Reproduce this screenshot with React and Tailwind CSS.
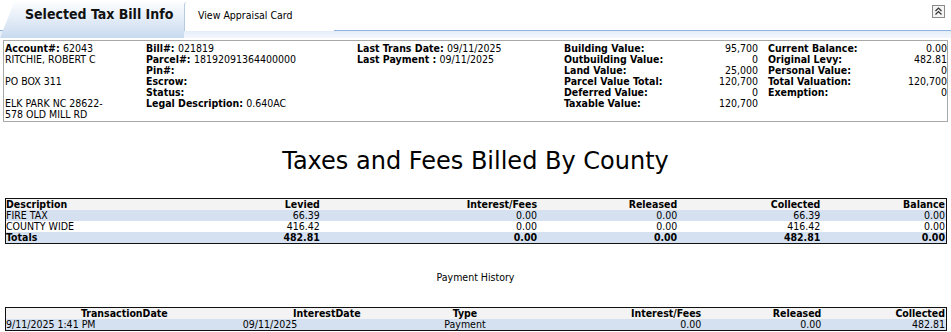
import React from 'react';

const owner = [
  { label: 'Account#:', value: '62043' },
  { value: 'RITCHIE, ROBERT C' },
  { value: '' },
  { value: 'PO BOX 311' },
  { value: '' },
  { value: 'ELK PARK NC 28622-' },
  { value: '578 OLD MILL RD' },
];

const bill = [
  { label: 'Bill#:', value: '021819' },
  { label: 'Parcel#:', value: '18192091364400000' },
  { label: 'Pin#:', value: '' },
  { label: 'Escrow:', value: '' },
  { label: 'Status:', value: '' },
  { label: 'Legal Description:', value: '0.640AC' },
];

const trans = [
  { label: 'Last Trans Date:', value: '09/11/2025' },
  { label: 'Last Payment :', value: '09/11/2025' },
];

const values = [
  ['Building Value:', '95,700'],
  ['Outbuilding Value:', '0'],
  ['Land Value:', '25,000'],
  ['Parcel Value Total:', '120,700'],
  ['Deferred Value:', '0'],
  ['Taxable Value:', '120,700'],
];

const balances = [
  ['Current Balance:', '0.00'],
  ['Original Levy:', '482.81'],
  ['Personal Value:', '0'],
  ['Total Valuation:', '120,700'],
  ['Exemption:', '0'],
];

const billed = [
  ['FIRE TAX', '66.39', '0.00', '0.00', '66.39', '0.00'],
  ['COUNTY WIDE', '416.42', '0.00', '0.00', '416.42', '0.00'],
];

function LabelLine({ label, value }) {
  return (
    <div className="h-[11px] whitespace-nowrap">
      {label && <span className="font-bold">{label} </span>}
      {value}
    </div>
  );
}

function ValueRows({ rows, width }) {
  return (
    <div className={width}>
      {rows.map(([l, v]) => (
        <div key={l} className="flex justify-between h-[11px] whitespace-nowrap">
          <span className="font-bold">{l}</span>
          <span>{v}</span>
        </div>
      ))}
    </div>
  );
}

function CollapseIcon() {
  return (
    <svg width="13" height="13" viewBox="0 0 13 13">
      <rect x="0.5" y="0.5" width="12" height="12" fill="#f4f4f4" stroke="#8a8a8a" />
      <path d="M3.5 6 L6.5 3 L9.5 6 M3.5 9.5 L6.5 6.5 L9.5 9.5" fill="none" stroke="#333" strokeWidth="1.2" />
    </svg>
  );
}

export default function App() {
  return (
    <div className="w-[951px] h-[332px] bg-white overflow-hidden text-black text-[10.5px] leading-[11px] font-['DejaVu_Sans_Condensed','DejaVu_Sans',sans-serif]">
      {/* tab bar */}
      <div className="relative h-[38px]">
        <div className="absolute left-0 right-0 top-[30px] h-[8px] border-t border-[#8fb4de] bg-linear-to-b from-[#e4edf8] to-[#f4f8fc]" />
        <div className="absolute left-0 top-0 h-[38px] w-[184px] bg-linear-to-b from-white to-[#c9daef] [clip-path:polygon(15px_0,100%_0,100%_100%,0_100%)] rounded-tr-[4px] pl-[25px] pt-[6px]">
          <span className="text-[14px] leading-[16px] font-bold text-[#111]">Selected Tax Bill Info</span>
        </div>
        <div className="absolute left-[184px] top-[2px] h-[29px] w-[150px] border-l border-[#b6c9e0] rounded-tl-[3px] bg-white pt-[8px] pl-[13px] text-[10.5px]">
          View Appraisal Card
        </div>
        <div className="absolute right-[6px] top-[5px]">
          <CollapseIcon />
        </div>
      </div>

      {/* info box */}
      <div className="mx-[3px] mt-[2px] h-[82px] border border-[#a8a8a8] flex pt-[2px] pl-[1px]">
        <div className="w-[141px]">
          {owner.map((o, i) => <LabelLine key={i} {...o} />)}
        </div>
        <div className="w-[211px]">
          {bill.map((o, i) => <LabelLine key={i} {...o} />)}
        </div>
        <div className="w-[207px]">
          {trans.map((o, i) => <LabelLine key={i} {...o} />)}
        </div>
        <ValueRows rows={values} width="w-[194px] mr-[10px]" />
        <ValueRows rows={balances} width="w-[179px]" />
      </div>

      {/* title */}
      <div className="mt-[24px] text-center text-[24px] leading-[30px] font-['DejaVu_Sans',sans-serif]">
        Taxes and Fees Billed By County
      </div>

      {/* billed table */}
      <table className="mt-[22px] ml-[5px] w-[942px] border border-[#111] border-collapse">
        <colgroup>
          <col className="w-[148px]" />
          <col className="w-[166px]" />
          <col className="w-[217px]" />
          <col className="w-[140px]" />
          <col className="w-[143px]" />
          <col className="w-[126px]" />
        </colgroup>
        <thead>
          <tr className="bg-[#f3f3f3] h-[11px] font-bold">
            <td className="text-left p-0">Description</td>
            <td className="text-right p-0">Levied</td>
            <td className="text-right p-0">Interest/Fees</td>
            <td className="text-right p-0">Released</td>
            <td className="text-right p-0">Collected</td>
            <td className="text-right p-0 pr-[1px]">Balance</td>
          </tr>
        </thead>
        <tbody>
          {billed.map((r, i) => (
            <tr key={r[0]} className={`h-[11px] ${i % 2 === 0 ? 'bg-[#d5e1f1]' : 'bg-white'}`}>
              {r.map((c, j) => (
                <td key={j} className={`p-0 ${j === 0 ? 'text-left' : j === 5 ? 'text-right pr-[1px]' : 'text-right'}`}>{c}</td>
              ))}
            </tr>
          ))}
          <tr className="h-[11px] bg-[#d5e1f1] font-bold">
            <td className="p-0 text-left">Totals</td>
            <td className="p-0 text-right">482.81</td>
            <td className="p-0 text-right">0.00</td>
            <td className="p-0 text-right">0.00</td>
            <td className="p-0 text-right">482.81</td>
            <td className="p-0 text-right pr-[1px]">0.00</td>
          </tr>
        </tbody>
      </table>

      <div className="mt-[28px] text-center">Payment History</div>

      {/* payment table */}
      <table className="mt-[24px] ml-[5px] w-[942px] border border-[#111] border-collapse">
        <colgroup>
          <col className="w-[237px]" />
          <col className="w-[168px]" />
          <col className="w-[108px]" />
          <col className="w-[182px]" />
          <col className="w-[120px]" />
          <col className="w-[125px]" />
        </colgroup>
        <thead>
          <tr className="bg-[#f3f3f3] h-[11px] font-bold">
            <td className="p-0 text-center">TransactionDate</td>
            <td className="p-0 text-center">InterestDate</td>
            <td className="p-0 text-center">Type</td>
            <td className="p-0 text-right">Interest/Fees</td>
            <td className="p-0 text-right">Released</td>
            <td className="p-0 text-right pr-[1px]">Collected</td>
          </tr>
        </thead>
        <tbody>
          <tr className="h-[11px] bg-[#d5e1f1]">
            <td className="p-0 text-left">9/11/2025 1:41 PM</td>
            <td className="p-0 text-left">09/11/2025</td>
            <td className="p-0 text-center">Payment</td>
            <td className="p-0 text-right">0.00</td>
            <td className="p-0 text-right">0.00</td>
            <td className="p-0 text-right pr-[1px]">482.81</td>
          </tr>
        </tbody>
      </table>
    </div>
  );
}
